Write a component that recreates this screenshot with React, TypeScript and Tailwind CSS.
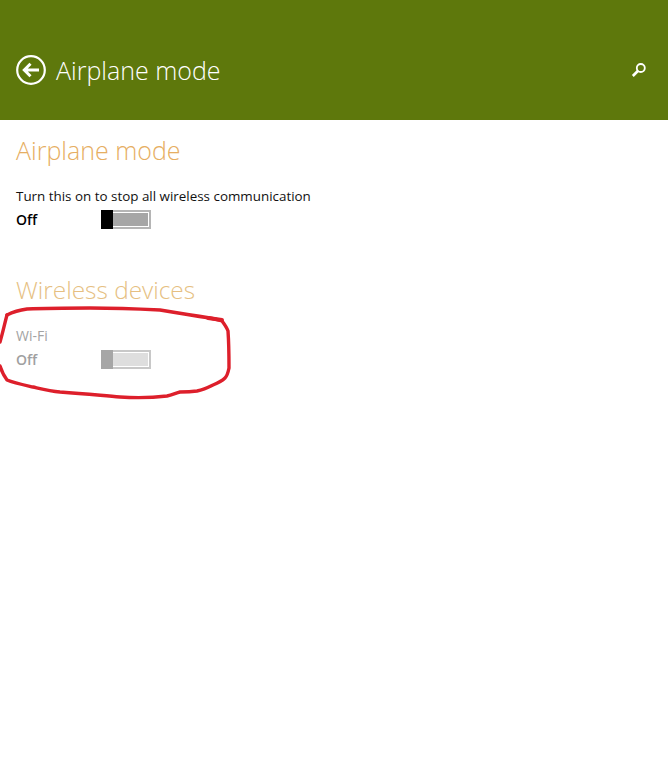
import React from "react";

function Toggle({ thumb, track, ring }: { thumb: string; track: string; ring: string }) {
  return (
    <div className={`flex h-[19px] w-[50px] border-y-2 border-r-2 ${ring}`}>
      <div className={`-my-[2px] h-[19px] w-3 ${thumb}`} />
      <div className={`flex-1 border border-l-0 border-white ${track}`} />
    </div>
  );
}

export default function App() {
  return (
    <div className="relative h-[768px] w-[668px] overflow-hidden bg-white font-['Open_Sans','Noto_Sans',sans-serif]">
      <header className="flex h-[120px] items-end justify-between bg-[#5e780c] pb-[35px] pl-4 pr-[21px]">
        <div className="flex items-center gap-[10px]">
          <svg width="30" height="30" viewBox="0 0 30 30" fill="none" stroke="#fff">
            <circle cx="15" cy="15" r="13.8" strokeWidth="2.2" />
            <path d="M23 15H8.5M14.5 8.8 8.3 15l6.2 6.2" strokeWidth="3" />
          </svg>
          <h1 className="text-[25px] leading-[30px] font-light text-white">Airplane mode</h1>
        </div>
        <svg width="16" height="16" viewBox="0 0 16 16" fill="none" stroke="#fff" className="mb-[7px]">
          <circle cx="9.8" cy="6" r="4" strokeWidth="1.8" />
          <path d="M6.8 9 1.8 14" strokeWidth="2.6" />
        </svg>
      </header>
      <main className="px-4">
        <h2 className="mt-[13px] text-[25px] leading-[34px] font-light text-[#e6ae62]">Airplane mode</h2>
        <p className="mt-[19px] text-[13.4px] leading-5 text-[#111]">Turn this on to stop all wireless communication</p>
        <div className="mt-[4px] flex h-5 items-start">
          <span className="w-[85px] text-sm leading-5 font-semibold text-black">Off</span>
          <Toggle thumb="bg-black" track="bg-[#a6a6a6]" ring="border-[#b5b5b5]" />
        </div>
        <h2 className="mt-[43px] text-[24.4px] leading-[34px] font-light text-[#e6bf82]">Wireless devices</h2>
        <p className="mt-[19px] text-sm leading-5 text-[#a3a3a3]">Wi-Fi</p>
        <div className="mt-[4px] flex h-5 items-start">
          <span className="w-[85px] text-sm leading-5 font-semibold text-[#a0a0a0]">Off</span>
          <Toggle thumb="bg-[#a6a6a6]" track="bg-[#dedede]" ring="border-[#c8c8c8]" />
        </div>
      </main>
      <svg className="absolute left-0 top-0" width="668" height="768" fill="none" stroke="#dd1f2b" strokeWidth="3.4" strokeLinecap="round" strokeLinejoin="round">
        <path d="M7 315C13 312 20 310 27 309C50 308 70 308 90 308C115 308 140 309 160 310C172 312 190 315 210 318C216 319 219 320 222 321C225 325 227 328 228 331C229 345 229 358 229 368C228 373 227 376 225 378C222 381 218 383 213 385C207 388 202 390 197 391C190 392 185 392 180 392C176 393 172 395 167 396C150 398 135 398 120 397C105 396 90 394 60 392C50 391 42 389 33 387C24 385 14 383 7 380C4 376 2 372 0 366" />
        <path d="M7 315C5 322 3 332 0 342" />
        <path d="M208 318 222 320" strokeWidth="4" />
      </svg>
    </div>
  );
}
